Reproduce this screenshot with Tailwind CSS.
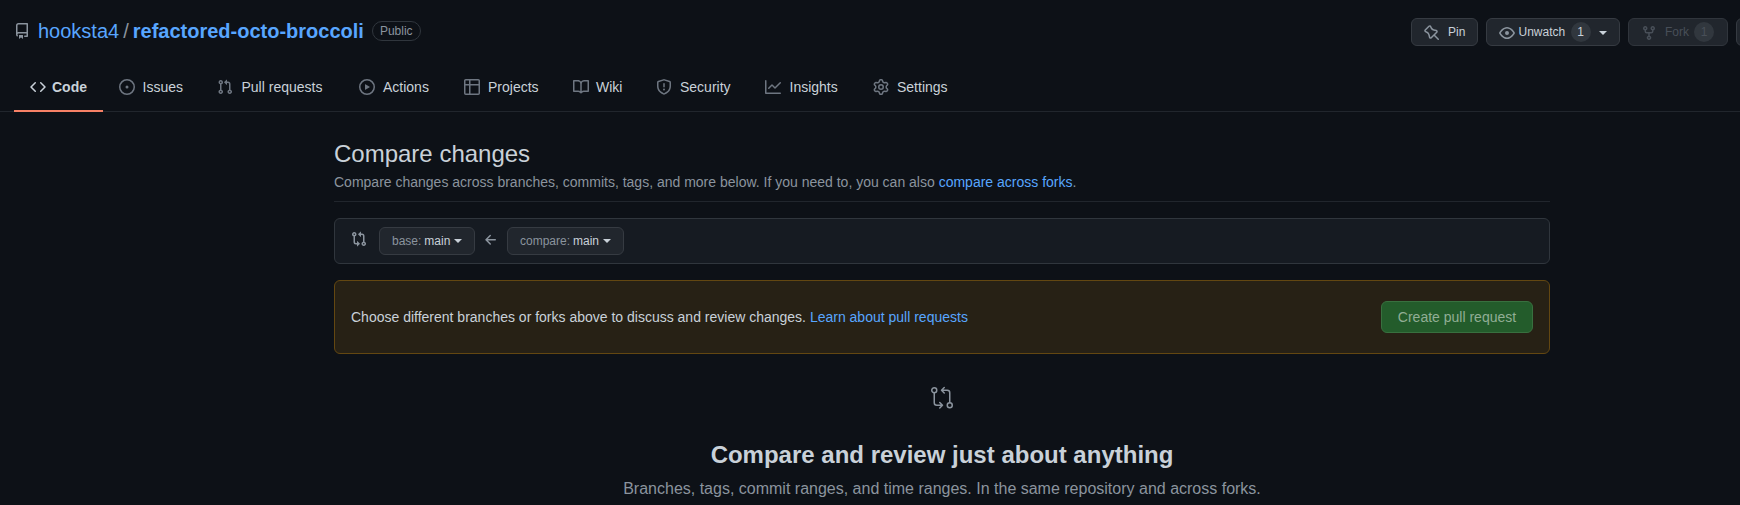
<!DOCTYPE html>
<html lang="en">
<head>
<meta charset="utf-8">
<title>Compare changes</title>
<script src="https://cdn.jsdelivr.net/npm/@tailwindcss/browser@4"></script>
</head>
<body class="h-[505px] overflow-hidden bg-[#0d1117] font-['Liberation_Sans',sans-serif] text-sm text-[#c9d1d9]">
<header class="h-28 border-b border-[#21262d]">
  <div class="flex h-[62px] items-start justify-between overflow-hidden">
    <div class="flex items-center pt-4 pl-[14px]">
      <svg class="mr-2 size-4 fill-[#8b949e]" viewBox="0 0 16 16"><path fill-rule="evenodd" d="M2 2.5A2.5 2.5 0 014.5 0h8.75a.75.75 0 01.75.75v12.5a.75.75 0 01-.75.75h-2.5a.75.75 0 110-1.5h1.75v-2h-8a1 1 0 00-.714 1.7.75.75 0 01-1.072 1.05A2.495 2.495 0 012 11.5v-9zm10.5-1V9h-8c-.356 0-.694.074-1 .208V2.5a1 1 0 011-1h8zM5 12.25v3.25a.25.25 0 00.4.2l1.45-1.087a.25.25 0 01.3 0L8.6 15.7a.25.25 0 00.4-.2v-3.25a.25.25 0 00-.25-.25h-3.5a.25.25 0 00-.25.25z"/></svg>
      <h1 class="flex text-xl leading-[30px] text-[#58a6ff]"><a>hooksta4</a><span class="mx-1 text-[#8b949e]">/</span><a class="font-bold">refactored-octo-broccoli</a></h1>
      <span class="ml-2 h-5 rounded-full border border-[#30363d] px-[7px] text-xs leading-[18px] text-[#8b949e]">Public</span>
    </div>
    <div class="flex w-[329px] shrink-0 gap-2 pt-[18px] text-xs">
      <button class="flex h-7 w-[67px] shrink-0 items-center rounded-md border border-[#363b42] bg-[#21262d] pl-3"><svg class="mt-px mr-2 size-4 fill-[#8b949e]" viewBox="0 0 16 16"><path fill-rule="evenodd" d="M4.456.734a1.75 1.75 0 012.826.504l.613 1.327a3.081 3.081 0 002.084 1.707l2.454.584c1.332.317 1.8 1.972.832 2.94L11.06 10l3.72 3.72a.75.75 0 11-1.061 1.06L10 11.06l-2.204 2.205c-.968.968-2.623.5-2.94-.832l-.584-2.454a3.081 3.081 0 00-1.707-2.084l-1.327-.613a1.75 1.75 0 01-.504-2.826L4.456.734zM5.92 1.866a.25.25 0 00-.404-.072L1.794 5.516a.25.25 0 00.072.404l1.328.613A4.582 4.582 0 015.73 9.63l.584 2.454a.25.25 0 00.42.12l5.47-5.47a.25.25 0 00-.12-.42L9.63 5.73a4.581 4.581 0 01-3.098-2.537L5.92 1.866z"/></svg>Pin</button>
      <button class="flex h-7 w-[134px] shrink-0 items-center rounded-md border border-[#363b42] bg-[#21262d] pl-3"><svg class="mt-[2px] mr-[3.5px] size-4 fill-[#8b949e]" viewBox="0 0 16 16"><path fill-rule="evenodd" d="M1.679 7.932c.412-.621 1.242-1.75 2.366-2.717C5.175 4.242 6.527 3.5 8 3.5c1.473 0 2.824.742 3.955 1.715 1.124.967 1.954 2.096 2.366 2.717a.119.119 0 010 .136c-.412.621-1.242 1.75-2.366 2.717C10.825 11.758 9.473 12.5 8 12.5c-1.473 0-2.824-.742-3.955-1.715C2.92 9.818 2.09 8.69 1.679 8.068a.119.119 0 010-.136zM8 2c-1.981 0-3.67.992-4.933 2.078C1.797 5.169.88 6.423.43 7.1a1.619 1.619 0 000 1.798c.45.678 1.367 1.932 2.637 3.024C4.329 13.008 6.019 14 8 14c1.981 0 3.67-.992 4.933-2.078 1.27-1.091 2.187-2.345 2.637-3.023a1.619 1.619 0 000-1.798c-.45-.678-1.367-1.932-2.637-3.023C11.671 2.992 9.981 2 8 2zm0 8a2 2 0 100-4 2 2 0 000 4z"/></svg>Unwatch<span class="ml-[5.5px] flex size-5 items-center justify-center rounded-full bg-[#31373e]">1</span><span class="mt-0.5 ml-2 border-x-4 border-t-4 border-x-transparent border-t-[#c9d1d9]"></span></button>
      <button class="flex h-7 w-[100px] shrink-0 items-center rounded-md border border-[#30353c] bg-[#21262d] pl-3 text-[#484f58]"><svg class="mt-[2px] mr-2 size-4 fill-[#484f58]" viewBox="0 0 16 16"><path fill-rule="evenodd" d="M5 3.25a.75.75 0 11-1.5 0 .75.75 0 011.5 0zm0 2.122a2.25 2.25 0 10-1.5 0v.878A2.25 2.25 0 005.75 8.5h1.5v2.128a2.251 2.251 0 101.5 0V8.5h1.5a2.25 2.25 0 002.25-2.25v-.878a2.25 2.25 0 10-1.5 0v.878a.75.75 0 01-.75.75h-4.5A.75.75 0 015 6.25v-.878zm3.75 7.378a.75.75 0 11-1.5 0 .75.75 0 011.5 0zm3-8.75a.75.75 0 100-1.5.75.75 0 000 1.5z"/></svg>Fork<span class="ml-[5px] flex size-5 items-center justify-center rounded-full bg-[#31373e]">1</span></button>
      <button class="h-7 w-20 shrink-0 rounded-md border border-[#363b42] bg-[#21262d]"></button>
    </div>
  </div>
  <nav class="flex h-[50px] pl-[14px] leading-[21px] *:pt-0.5">
    <a class="flex w-[89px] items-center gap-1.5 border-b-2 border-[#f78166] pl-4 font-bold"><svg class="size-4 fill-current" viewBox="0 0 16 16"><path d="M4.72 3.22a.75.75 0 011.06 1.06L2.06 8l3.72 3.72a.75.75 0 11-1.06 1.06L.47 8.53a.75.75 0 010-1.06l4.25-4.25zm6.56 0a.75.75 0 10-1.06 1.06L13.94 8l-3.72 3.72a.75.75 0 101.06 1.06l4.25-4.25a.75.75 0 000-1.06l-4.25-4.25z"/></svg>Code</a>
    <a class="flex w-[98px] items-center gap-[7.5px] border-b-2 border-transparent pl-4"><svg class="size-4 fill-[#6e7681]" viewBox="0 0 16 16"><path fill-rule="evenodd" d="M8 9.5a1.5 1.5 0 100-3 1.5 1.5 0 000 3zM8 0a8 8 0 100 16A8 8 0 008 0zM1.5 8a6.5 6.5 0 1113 0 6.5 6.5 0 01-13 0z"/></svg>Issues</a>
    <a class="flex w-[142px] items-center gap-[8.5px] border-b-2 border-transparent pl-4"><svg class="size-4 fill-[#6e7681]" viewBox="0 0 16 16"><path fill-rule="evenodd" d="M7.177 3.073L9.573.677A.25.25 0 0110 .854v4.792a.25.25 0 01-.427.177L7.177 3.427a.25.25 0 010-.354zM3.75 2.5a.75.75 0 100 1.5.75.75 0 000-1.5zm-2.25.75a2.25 2.25 0 113 2.122v5.256a2.251 2.251 0 11-1.5 0V5.372A2.25 2.25 0 011.5 3.25zM11 2.5h-1V4h1a1 1 0 011 1v5.628a2.251 2.251 0 101.5 0V5A2.5 2.5 0 0011 2.5zm1 10.25a.75.75 0 111.5 0 .75.75 0 01-1.5 0zM3.75 12a.75.75 0 100 1.5.75.75 0 000-1.5z"/></svg>Pull requests</a>
    <a class="flex w-[105px] items-center gap-2 border-b-2 border-transparent pl-4"><svg class="size-4 fill-[#6e7681]" viewBox="0 0 16 16"><path fill-rule="evenodd" d="M1.5 8a6.5 6.5 0 1113 0 6.5 6.5 0 01-13 0zM8 0a8 8 0 100 16A8 8 0 008 0zM6.379 5.227A.25.25 0 006 5.442v5.117a.25.25 0 00.379.214l4.264-2.559a.25.25 0 000-.428L6.379 5.227z"/></svg>Actions</a>
    <a class="flex w-[109px] items-center gap-2 border-b-2 border-transparent pl-4"><svg class="size-4 fill-[#6e7681]" viewBox="0 0 16 16"><path fill-rule="evenodd" d="M0 1.75C0 .784.784 0 1.75 0h12.5C15.216 0 16 .784 16 1.75v3.585a.746.746 0 010 .83v8.085A1.75 1.75 0 0114.25 16H6.309a.748.748 0 01-1.118 0H1.75A1.75 1.75 0 010 14.25V6.165a.746.746 0 010-.83V1.75zM1.5 6.5v7.75c0 .138.112.25.25.25H5v-8H1.5zM5 5H1.5V1.75a.25.25 0 01.25-.25H5V5zm1.5 1.5v8h7.75a.25.25 0 00.25-.25V6.5h-8zm8-1.5h-8V1.5h7.75a.25.25 0 01.25.25V5z"/></svg>Projects</a>
    <a class="flex w-[83px] items-center gap-[7px] border-b-2 border-transparent pl-4"><svg class="size-4 fill-[#6e7681]" viewBox="0 0 16 16"><path fill-rule="evenodd" d="M0 1.75A.75.75 0 01.75 1h4.253c1.227 0 2.317.59 3 1.501A3.744 3.744 0 0111.006 1h4.245a.75.75 0 01.75.75v10.5a.75.75 0 01-.75.75h-4.507a2.25 2.25 0 00-1.591.659l-.622.621a.75.75 0 01-1.06 0l-.622-.621A2.25 2.25 0 005.258 13H.75a.75.75 0 01-.75-.75V1.75zm8.755 3a2.25 2.25 0 012.25-2.25H14.5v9h-3.757c-.71 0-1.4.201-1.992.572l.004-7.322zm-1.504 7.324l.004-5.073-.002-2.253A2.25 2.25 0 005.003 2.5H1.5v9h3.757a3.75 3.75 0 011.994.574z"/></svg>Wiki</a>
    <a class="flex w-[109px] items-center gap-2 border-b-2 border-transparent pl-4"><svg class="size-4 fill-[#6e7681]" viewBox="0 0 16 16"><path fill-rule="evenodd" d="M7.467.133a1.75 1.75 0 011.066 0l5.25 1.68A1.75 1.75 0 0115 3.48V7c0 1.566-.32 3.182-1.303 4.682-.983 1.498-2.585 2.813-5.032 3.855a1.7 1.7 0 01-1.33 0c-2.447-1.042-4.049-2.357-5.032-3.855C1.32 10.182 1 8.566 1 7V3.48a1.75 1.75 0 011.217-1.667l5.25-1.68zm.61 1.429a.25.25 0 00-.153 0l-5.25 1.68a.25.25 0 00-.174.238V7c0 1.358.275 2.666 1.057 3.86.784 1.194 2.121 2.34 4.366 3.297a.2.2 0 00.154 0c2.245-.956 3.582-2.104 4.366-3.298C13.225 9.666 13.5 8.36 13.5 7V3.48a.25.25 0 00-.174-.237l-5.25-1.68zM9 10.5a1 1 0 11-2 0 1 1 0 012 0zm-.25-5.75a.75.75 0 10-1.5 0v3a.75.75 0 001.5 0v-3z"/></svg>Security</a>
    <a class="flex w-[108px] items-center gap-[8.5px] border-b-2 border-transparent pl-4"><svg class="size-4 fill-[#6e7681]" viewBox="0 0 16 16"><path fill-rule="evenodd" d="M1.5 1.75a.75.75 0 00-1.5 0v12.5c0 .414.336.75.75.75h14.5a.75.75 0 000-1.5H1.5V1.75zm14.28 2.53a.75.75 0 00-1.06-1.06L10 7.94 7.53 5.47a.75.75 0 00-1.06 0L3.22 8.72a.75.75 0 001.06 1.06L7 7.06l2.47 2.47a.75.75 0 001.06 0l5.25-5.25z"/></svg>Insights</a>
    <a class="flex items-center gap-2 border-b-2 border-transparent pl-4"><svg class="size-4 fill-[#6e7681]" viewBox="0 0 16 16"><path fill-rule="evenodd" d="M7.429 1.525a6.593 6.593 0 011.142 0c.036.003.108.036.137.146l.289 1.105c.147.56.55.967.997 1.189.174.086.341.183.501.29.417.278.97.423 1.53.27l1.102-.303c.11-.03.175.016.195.046.219.31.41.641.573.989.014.031.022.11-.059.19l-.815.806c-.411.406-.562.957-.53 1.456a4.588 4.588 0 010 .582c-.032.499.119 1.05.53 1.456l.815.806c.08.08.073.159.059.19a6.494 6.494 0 01-.573.99c-.02.029-.086.074-.195.045l-1.103-.303c-.559-.153-1.112-.008-1.529.27-.16.107-.327.204-.5.29-.449.222-.851.628-.998 1.189l-.289 1.105c-.029.11-.101.143-.137.146a6.613 6.613 0 01-1.142 0c-.036-.003-.108-.037-.137-.146l-.289-1.105c-.147-.56-.55-.967-.997-1.189a4.502 4.502 0 01-.501-.29c-.417-.278-.97-.423-1.53-.27l-1.102.303c-.11.03-.175-.016-.195-.046a6.492 6.492 0 01-.573-.989c-.014-.031-.022-.11.059-.19l.815-.806c.411-.406.562-.957.53-1.456a4.587 4.587 0 010-.582c.032-.499-.119-1.05-.53-1.456l-.815-.806c-.08-.08-.073-.159-.059-.19a6.44 6.44 0 01.573-.99c.02-.029.086-.075.195-.045l1.103.303c.559.153 1.112.008 1.529-.27.16-.107.327-.204.5-.29.449-.222.851-.628.998-1.189l.289-1.105c.029-.11.101-.143.137-.146zM8 0c-.236 0-.47.01-.701.03-.743.065-1.29.615-1.458 1.261l-.29 1.106c-.017.066-.078.158-.211.224a5.994 5.994 0 00-.668.386c-.123.082-.233.09-.3.071L3.27 2.776c-.644-.177-1.392.02-1.82.63a7.977 7.977 0 00-.704 1.217c-.315.675-.111 1.422.363 1.891l.815.806c.05.048.098.147.088.294a6.084 6.084 0 000 .772c.01.147-.038.246-.088.294l-.815.806c-.474.469-.678 1.216-.363 1.891.2.428.436.835.704 1.218.428.609 1.176.806 1.82.63l1.103-.303c.066-.019.176-.011.299.071.213.143.436.272.668.386.133.066.194.158.212.224l.289 1.106c.169.646.715 1.196 1.458 1.26a8.094 8.094 0 001.402 0c.743-.064 1.29-.614 1.458-1.26l.29-1.106c.017-.066.078-.158.211-.224a5.98 5.98 0 00.668-.386c.123-.082.233-.09.3-.071l1.102.302c.644.177 1.392-.02 1.82-.63.268-.382.505-.789.704-1.217.315-.675.111-1.422-.364-1.891l-.814-.806c-.05-.048-.098-.147-.088-.294a6.1 6.1 0 000-.772c-.01-.147.039-.246.088-.294l.814-.806c.475-.469.679-1.216.364-1.891a7.992 7.992 0 00-.704-1.218c-.428-.609-1.176-.806-1.82-.63l-1.103.303c-.066.019-.176.011-.299-.071a5.991 5.991 0 00-.668-.386c-.133-.066-.194-.158-.212-.224L10.16 1.29C9.99.645 9.444.095 8.701.031A8.094 8.094 0 008 0zm1.5 8a1.5 1.5 0 11-3 0 1.5 1.5 0 013 0zM11 8a3 3 0 11-6 0 3 3 0 016 0z"/></svg>Settings</a>
  </nav>
</header>
<main class="ml-[334px] w-[1216px] pt-6">
  <div class="h-[66px] border-b border-[#21262d]">
    <h2 class="text-2xl leading-9">Compare changes</h2>
    <p class="leading-[21px] text-[#8b949e]">Compare changes across branches, commits, tags, and more below. If you need to, you can also <a class="text-[#58a6ff]">compare across forks</a>.</p>
  </div>
  <div class="mt-4 flex h-[46px] items-center rounded-md border border-[#30363d] bg-[#161b22] pl-4 text-xs">
    <svg class="mr-3 mb-1 size-4 fill-[#8b949e]" viewBox="0 0 16 16"><path fill-rule="evenodd" d="M9.573.677L7.177 3.073a.25.25 0 000 .354l2.396 2.396A.25.25 0 0010 5.646V4h1a1 1 0 011 1v5.628a2.251 2.251 0 101.5 0V5A2.5 2.5 0 0011 2.5h-1V.854a.25.25 0 00-.427-.177zM6 12v-1.646a.25.25 0 01.427-.177l2.396 2.396a.25.25 0 010 .354l-2.396 2.396A.25.25 0 016 15.146V13.5H5A2.5 2.5 0 012.5 11V5.372a2.25 2.25 0 111.5 0V11a1 1 0 001 1h1zM4 3.25a.75.75 0 10-1.5 0 .75.75 0 001.5 0zM12.75 12a.75.75 0 100 1.5.75.75 0 000-1.5z"/></svg>
    <button class="flex h-7 w-24 items-center rounded-md border border-[#363b42] bg-[#21262d] pl-3"><span class="mr-[3px] text-[#8b949e]">base:</span>main<span class="ml-1 border-x-4 border-t-4 border-x-transparent border-t-[#c9d1d9]"></span></button>
    <svg class="mx-2 mb-0.5 size-4 fill-[#8b949e]" viewBox="0 0 16 16"><path fill-rule="evenodd" d="M7.78 12.53a.75.75 0 01-1.06 0L2.47 8.28a.75.75 0 010-1.06l4.25-4.25a.75.75 0 011.06 1.06L4.81 7h7.44a.75.75 0 010 1.5H4.81l2.97 2.97a.75.75 0 010 1.06z"/></svg>
    <button class="flex h-7 w-[117px] items-center rounded-md border border-[#363b42] bg-[#21262d] pl-3"><span class="mr-[3px] text-[#8b949e]">compare:</span>main<span class="ml-1 border-x-4 border-t-4 border-x-transparent border-t-[#c9d1d9]"></span></button>
  </div>
  <div class="mt-4 flex h-[74px] items-center justify-between rounded-md border border-[#634711] bg-[#272115] px-4">
    <p>Choose different branches or forks above to discuss and review changes. <a class="text-[#58a6ff]">Learn about pull requests</a></p>
    <button class="h-8 w-[152px] rounded-md border border-[#38703f] bg-[#235c2b] text-[#91ae95]">Create pull request</button>
  </div>
  <div class="flex flex-col items-center pt-8">
    <svg class="size-6 fill-none stroke-[#8b949e] stroke-[1.5]" stroke-linecap="round" stroke-linejoin="round" viewBox="0 0 24 24"><circle cx="4.25" cy="4.25" r="2.5"/><circle cx="19.75" cy="19.25" r="2.5"/><path d="M4.25 7v9.75a2.5 2.5 0 002.5 2.5H12M19.75 16.5V6.75a2.5 2.5 0 00-2.5-2.5H12M9.75 16.5l2.75 2.75L9.75 22M14.25 1.5l-2.75 2.75L14.25 7"/></svg>
    <h3 class="mt-[27px] text-2xl leading-9 font-bold">Compare and review just about anything</h3>
    <p class="mt-1 text-base leading-6 text-[#8b949e]">Branches, tags, commit ranges, and time ranges. In the same repository and across forks.</p>
  </div>
</main>
</body>
</html>
